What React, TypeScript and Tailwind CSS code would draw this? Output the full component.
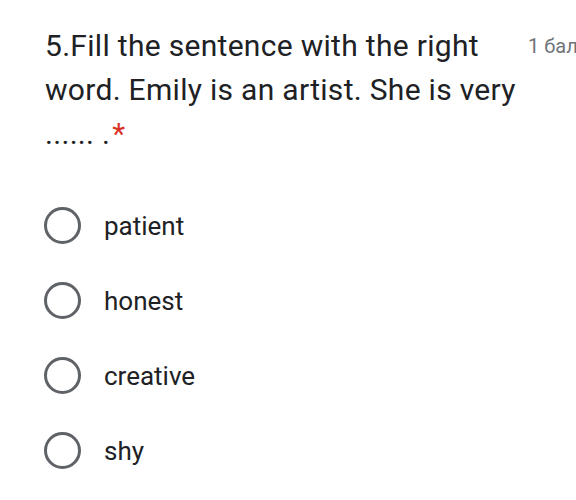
const OPTIONS = ['patient', 'honest', 'creative', 'shy'];

function Radio() {
  return <span className="block h-[37px] w-[37px] shrink-0 rounded-full border-[3px] border-[#5f6368]" />;
}

export default function App() {
  return (
    <div className="h-[500px] w-[576px] overflow-hidden bg-white font-['Roboto',sans-serif] text-[#202124]">
      <div className="flex items-start gap-[3px] pl-[45px] pt-[24px]">
        <div className="w-[480px] shrink-0 text-[30px] leading-[44px] tracking-[0.3px]">
          5.Fill the sentence with the right word. Emily is an artist. She is very ...... .
          <span className="ml-[2px] text-[#d93025]">*</span>
        </div>
        <div className="shrink-0 whitespace-nowrap pt-[10px] text-[20px] leading-[24px] text-[#70757a]">1 балл</div>
      </div>
      <div className="mt-[32px] flex flex-col pl-[44px]">
        {OPTIONS.map((o) => (
          <div key={o} className="flex h-[75px] items-center gap-[23px]">
            <Radio />
            <span className="text-[26px] leading-[30px]">{o}</span>
          </div>
        ))}
      </div>
    </div>
  );
}
